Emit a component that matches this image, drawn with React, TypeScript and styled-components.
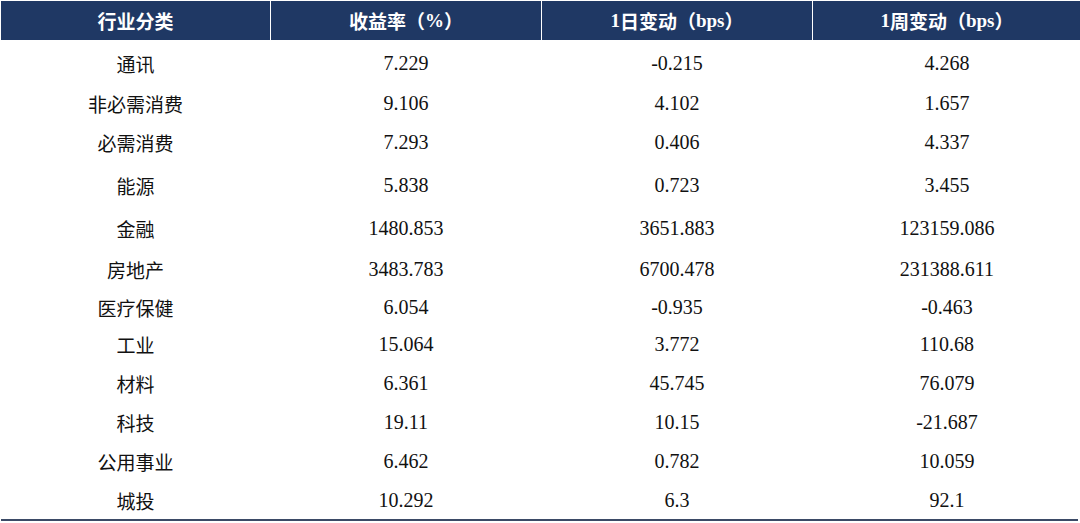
import React from 'react';
import styled, { createGlobalStyle } from 'styled-components';

const GlobalStyle = createGlobalStyle`
  html, body {
    margin: 0;
    padding: 0;
    background: #ffffff;
  }
  #root {
    width: 1080px;
    height: 523px;
  }
`;

const Wrapper = styled.div`
  width: 1080px;
  height: 523px;
  padding: 1px 2px 0 1px;
  box-sizing: border-box;
  background: #ffffff;
`;

const Table = styled.div`
  display: flex;
  flex-direction: column;
  border-bottom: 2px solid #3b4a66;
`;

const HeaderRow = styled.div`
  display: grid;
  grid-template-columns: 269px 270px 270px 268px;
  column-gap: 1px;
  height: 39px;
`;

const HeaderCell = styled.div`
  background: #1f3864;
  color: #ffffff;
  display: flex;
  align-items: center;
  justify-content: center;
  font-family: 'Liberation Serif', 'Noto Sans CJK SC', serif;
  font-weight: bold;
  font-size: 19px;

  .cjk {
    font-family: 'Noto Sans CJK SC', sans-serif;
  }
`;

const Row = styled.div<{ $h: number }>`
  display: grid;
  grid-template-columns: 269px 270px 270px 268px;
  column-gap: 1px;
  height: ${p => p.$h}px;
  align-items: center;
`;

const NameCell = styled.div`
  text-align: center;
  font-family: 'Noto Sans CJK SC', sans-serif;
  font-size: 19px;
  color: #111111;
`;

const NumCell = styled.div`
  text-align: center;
  font-family: 'Liberation Serif', serif;
  font-size: 20px;
  color: #111111;
`;

const rows: { name: string; v: string[]; h: number }[] = [
  { name: '通讯', v: ['7.229', '-0.215', '4.268'], h: 47 },
  { name: '非必需消费', v: ['9.106', '4.102', '1.657'], h: 33 },
  { name: '必需消费', v: ['7.293', '0.406', '4.337'], h: 44 },
  { name: '能源', v: ['5.838', '0.723', '3.455'], h: 43 },
  { name: '金融', v: ['1480.853', '3651.883', '123159.086'], h: 42 },
  { name: '房地产', v: ['3483.783', '6700.478', '231388.611'], h: 40 },
  { name: '医疗保健', v: ['6.054', '-0.935', '-0.463'], h: 36 },
  { name: '工业', v: ['15.064', '3.772', '110.68'], h: 38 },
  { name: '材料', v: ['6.361', '45.745', '76.079'], h: 41 },
  { name: '科技', v: ['19.11', '10.15', '-21.687'], h: 37 },
  { name: '公用事业', v: ['6.462', '0.782', '10.059'], h: 40 },
  { name: '城投', v: ['10.292', '6.3', '92.1'], h: 38 },
];

export default function App() {
  return (
    <>
      <GlobalStyle />
      <Wrapper>
        <Table>
          <HeaderRow>
            <HeaderCell><span className="cjk">行业分类</span></HeaderCell>
            <HeaderCell><span className="cjk">收益率（</span>%<span className="cjk">）</span></HeaderCell>
            <HeaderCell>1<span className="cjk">日变动（</span>bps<span className="cjk">）</span></HeaderCell>
            <HeaderCell>1<span className="cjk">周变动（</span>bps<span className="cjk">）</span></HeaderCell>
          </HeaderRow>
          {rows.map(r => (
            <Row key={r.name} $h={r.h}>
              <NameCell>{r.name}</NameCell>
              {r.v.map((x, i) => (
                <NumCell key={i}>{x}</NumCell>
              ))}
            </Row>
          ))}
        </Table>
      </Wrapper>
    </>
  );
}
